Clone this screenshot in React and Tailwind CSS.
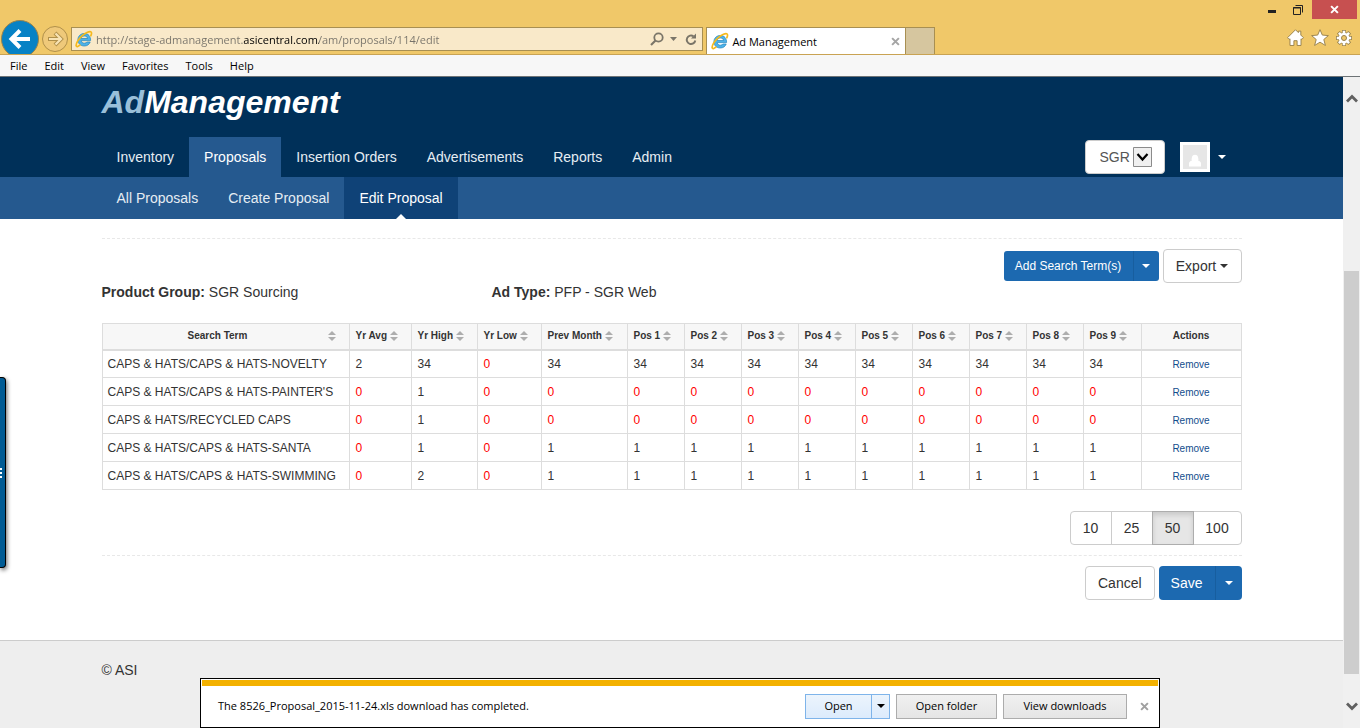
import React from "react";

const uiFont = "font-['Open_Sans','Noto_Sans',sans-serif]";

const menus = ["File", "Edit", "View", "Favorites", "Tools", "Help"];
const mainNav = ["Inventory", "Proposals", "Insertion Orders", "Advertisements", "Reports", "Admin"];
const subNav = ["All Proposals", "Create Proposal", "Edit Proposal"];

const columns = [
  { label: "Search Term", width: "w-[247px]" },
  { label: "Yr Avg", width: "w-[62px]" },
  { label: "Yr High", width: "w-[66px]" },
  { label: "Yr Low", width: "w-[64px]" },
  { label: "Prev Month", width: "w-[86px]" },
  { label: "Pos 1", width: "w-[57px]" },
  { label: "Pos 2", width: "w-[57px]" },
  { label: "Pos 3", width: "w-[57px]" },
  { label: "Pos 4", width: "w-[57px]" },
  { label: "Pos 5", width: "w-[57px]" },
  { label: "Pos 6", width: "w-[57px]" },
  { label: "Pos 7", width: "w-[57px]" },
  { label: "Pos 8", width: "w-[57px]" },
  { label: "Pos 9", width: "w-[58px]" },
];

const rows = [
  { term: "CAPS & HATS/CAPS & HATS-NOVELTY", avg: 2, high: 34, low: 0, prev: 34, pos: 34 },
  { term: "CAPS & HATS/CAPS & HATS-PAINTER'S", avg: 0, high: 1, low: 0, prev: 0, pos: 0 },
  { term: "CAPS & HATS/RECYCLED CAPS", avg: 0, high: 1, low: 0, prev: 0, pos: 0 },
  { term: "CAPS & HATS/CAPS & HATS-SANTA", avg: 0, high: 1, low: 0, prev: 1, pos: 1 },
  { term: "CAPS & HATS/CAPS & HATS-SWIMMING", avg: 0, high: 2, low: 0, prev: 1, pos: 1 },
];

function IeIcon() {
  return (
    <svg width="18" height="18" viewBox="0 0 18 18" className="shrink-0" aria-hidden="true">
      <path
        d="M15.600 10.600H6.300c.2 1.600 1.400 2.600 3.100 2.600 1.200 0 2-.4 2.600-1.200h3.200c-.9 2.500-3 4-5.900 4-3.800 0-6.400-2.500-6.400-6.200S5.600 3.500 9.400 3.500c3.900 0 6.300 2.700 6.200 7.100zM6.300 8.500h6.200C12.300 6.900 11.200 6 9.400 6S6.500 6.900 6.300 8.500z"
        fill="#4db2e8"
        stroke="#2385bf"
        strokeWidth="0.7"
      />
      <path
        d="M4.800 15.200C3 16.900 1.500 17 1.200 15.900c-.5-2 2-6.600 5.800-10C10.700 2.500 14.900.8 16.100 2c.7.7.5 2-.2 3.600"
        fill="none"
        stroke="#f5b91c"
        strokeWidth="1.700"
        strokeLinecap="round"
      />
    </svg>
  );
}

function Caret({ className = "" }) {
  return (
    <svg width="8" height="4" viewBox="0 0 8 4" className={"shrink-0 " + className} aria-hidden="true">
      <path d="M0 0h8L4 4z" fill="currentColor" />
    </svg>
  );
}

function SortIcon() {
  return (
    <svg width="8" height="10" viewBox="0 0 8 10" className="shrink-0" aria-hidden="true">
      <path d="M0 4l4-4 4 4zM0 6h8l-4 4z" fill="#adadad" />
    </svg>
  );
}

function CrossIcon({ size = 8, className = "" }) {
  return (
    <svg width={size} height={size} viewBox="0 0 8 8" className={className} aria-hidden="true">
      <path d="M1 1l6 6M7 1L1 7" stroke="currentColor" strokeWidth="1.800" />
    </svg>
  );
}

function BrowserBar() {
  return (
    <header className={"relative flex h-[55px] shrink-0 items-end overflow-hidden border-b border-[#c9a353] bg-[#f0c869] text-[11px] " + uiFont}>
      <button aria-label="Back" className="h-[34px] w-[41px] shrink-0">
        <svg width="41" height="34" viewBox="0 0 41 34" aria-hidden="true">
          <circle cx="20" cy="19" r="18.500" fill="#0782c5" stroke="#98834d" />
          <path d="M30 19H12M20 10.500l-8.500 8.500 8.500 8.500" fill="none" stroke="#fff" strokeWidth="4" />
        </svg>
      </button>
      <button aria-label="Forward" className="h-[34px] w-[30px] shrink-0">
        <svg width="30" height="34" viewBox="0 0 30 34" fill="none" aria-hidden="true">
          <circle cx="14" cy="19" r="12.500" fill="#efc97a" stroke="#b0904a" />
          <path d="M7 19h12M14 13l6 6-6 6" stroke="#b0904a" strokeWidth="4" />
          <path d="M8 19h11M14.500 13.500l5.500 5.500-5.500 5.500" stroke="#f8e3b4" strokeWidth="2.200" />
        </svg>
      </button>
      <div className="mb-[3px] flex h-6 w-[46.5%] shrink-0 items-center border border-[#a88f52] bg-[#f9e9c9] pl-[3px] text-[#7a7568]">
        <IeIcon />
        <input
          type="text"
          aria-label="Address"
          defaultValue="http://stage-admanagement.asicentral.com/am/proposals/114/edit"
          className="ml-[3px] min-w-0 flex-1 bg-[linear-gradient(90deg,#77736a_148px,#000_148px,#000_223px,#77736a_223px)] bg-clip-text pt-[2px] text-transparent outline-none"
        />
        <button aria-label="Search" className="w-4">
          <svg width="14" height="14" viewBox="0 0 14 14" fill="none" stroke="currentColor" strokeWidth="1.800" aria-hidden="true">
            <circle cx="8.500" cy="5.500" r="4.200" />
            <path d="M5.500 8.500L1 13" strokeWidth="2.200" />
          </svg>
        </button>
        <button aria-label="Show suggestions" className="ml-1">
          <svg width="7" height="4" viewBox="0 0 7 4" aria-hidden="true"><path d="M0 0h7L3.500 4z" fill="currentColor" /></svg>
        </button>
        <button aria-label="Refresh" className="mr-[5px] ml-2">
          <svg width="12" height="13" viewBox="0 0 12 13" fill="none" aria-hidden="true">
            <path d="M8.500 3.200A4.300 4.300 0 1 0 10.300 7.500" stroke="currentColor" strokeWidth="1.900" />
            <path d="M6 5.500h5V.5z" fill="currentColor" />
          </svg>
        </button>
      </div>
      <div className="ml-[3px] flex h-[27px] w-[200px] shrink-0 items-center border-x border-t border-[#a88f52] bg-white pl-1 text-black">
        <IeIcon />
        <span className="ml-[3px] flex-1 pt-[2px]">Ad Management</span>
        <button aria-label="Close tab" className="mr-[5px] text-[#a5a5a5]"><CrossIcon size={9} /></button>
      </div>
      <button aria-label="New tab" className="h-[27px] w-[29px] shrink-0 border-t border-r border-[#a88f52] bg-[#d6c69f]" />
      <div className="ml-auto flex h-full flex-col items-end justify-between pb-2">
        <div className="mr-[3px] flex h-[19px] items-center text-[#222]">
          <button aria-label="Minimize" className="mr-[17px]">
            <svg width="8" height="19" aria-hidden="true"><path d="M0 11.500h8" stroke="currentColor" strokeWidth="3" /></svg>
          </button>
          <button aria-label="Restore" className="mr-[9px]">
            <svg width="10" height="10" viewBox="0 0 10 10" fill="none" stroke="currentColor" aria-hidden="true">
              <path d="M.5 2.500h7v7h-7zM2.500 .500h7v7M0 3h8" />
            </svg>
          </button>
          <button aria-label="Close window" className="flex h-[19px] w-[45px] items-center justify-center bg-[#c75050] text-white">
            <CrossIcon size={9} />
          </button>
        </div>
        <div className="mr-2 flex items-center gap-[7px]">
          <button aria-label="Home">
            <svg width="17" height="17" viewBox="0 0 16 16" fill="#fff" stroke="#98824c" strokeWidth="0.900" aria-hidden="true">
              <path d="M8 .7L.5 8.200l1.600 1.600.7-.6v6.300h3.700v-4.500h3v4.500h3.700V9.200l.7.600 1.600-1.600L13 5.700V2h-2.300v1.400z" />
            </svg>
          </button>
          <button aria-label="Favorites">
            <svg width="18" height="17" viewBox="0 0 17 16" fill="#fff" stroke="#98824c" strokeWidth="0.900" aria-hidden="true">
              <path d="M8.500.6l2.200 5.100 5.700.5-4.300 3.700 1.500 5.600-5.100-3.100-5.100 3.100 1.500-5.600L.6 6.200l5.700-.5z" />
            </svg>
          </button>
          <button aria-label="Tools">
            <svg width="16" height="16" viewBox="0 0 16 16" aria-hidden="true">
              <g stroke="#98824c" strokeWidth="4">
                <path d="M8 0v16M0 8h16M2.300 2.300l11.400 11.400M13.700 2.300L2.300 13.700" />
              </g>
              <circle cx="8" cy="8" r="6" fill="#98824c" />
              <g stroke="#fff" strokeWidth="2.600">
                <path d="M8 .8v14.400M.8 8h14.400M2.900 2.900l10.200 10.200M13.100 2.900L2.900 13.100" />
              </g>
              <circle cx="8" cy="8" r="5.300" fill="#fff" />
              <circle cx="8" cy="8" r="2.500" fill="#f0c869" stroke="#98824c" strokeWidth="1" />
            </svg>
          </button>
        </div>
      </div>
    </header>
  );
}

function SiteHeader() {
  return (
    <div className="text-sm text-[#e6edf3]">
      <div className="bg-[#003059]">
        <div className="mx-auto max-w-[1140px]">
          <h1 className="flex h-[60px] items-start pt-[7px] text-[32px] leading-9 font-bold text-white italic">
            <span className="text-[#99bfd9]">Ad</span>Management
          </h1>
          <div className="flex h-10 items-center">
            <nav aria-label="Main" className="flex flex-1">
              {mainNav.map((item) => (
                <a
                  key={item}
                  href="#"
                  className={"px-[15px] leading-10 " + (item === "Proposals" ? "bg-[#25598f] text-white" : "")}
                >
                  {item}
                </a>
              ))}
            </nav>
            <div className="relative rounded border border-[#ccc] bg-white">
              <select
                aria-label="Product group"
                className="h-8 w-[78px] appearance-none bg-transparent pl-[14px] text-[#555] outline-none"
              >
                <option>SGR</option>
              </select>
              <svg width="19" height="20" viewBox="0 0 19 20" className="pointer-events-none absolute top-[6px] right-3" aria-hidden="true">
                <path d="M.5 .500h18v19H.5z" fill="#f0f0f0" stroke="#8b8b8b" />
                <path d="M4.500 7l5 5.500 5-5.500" fill="none" stroke="#000" strokeWidth="2.200" />
              </svg>
            </div>
            <button aria-label="Account" className="mr-4 ml-[15px] flex items-center gap-2">
              <svg width="30" height="30" viewBox="0 0 30 30" aria-hidden="true">
                <path d="M0 0h30v30H0z" fill="#fff" />
                <path d="M3 3h24v24H3z" fill="#e6e6e6" />
                <path d="M9 24.500v-3c0-1.500 1-2.500 3-3l-.5-1 .5-2.500c.4-1.500 1.500-2.200 3-2.200s2.600.7 3 2.200l.5 2.500-.5 1c2 .5 3 1.500 3 3v3z" fill="#fff" />
              </svg>
              <Caret className="text-white" />
            </button>
          </div>
        </div>
      </div>
      <div className="bg-[#25598f]">
        <nav aria-label="Proposals" className="mx-auto flex max-w-[1140px]">
          {subNav.map((item) => (
            <a
              key={item}
              href="#"
              className={"relative px-[15px] leading-[42px] " + (item === "Edit Proposal" ? "bg-[#0f4277] text-white" : "")}
            >
              {item}
              {item === "Edit Proposal" && (
                <svg width="10" height="5" viewBox="0 0 10 5" className="absolute bottom-0 left-1/2 -translate-x-1/2" aria-hidden="true">
                  <path d="M0 5l5-5 5 5z" fill="#fff" />
                </svg>
              )}
            </a>
          ))}
        </nav>
      </div>
    </div>
  );
}

function Value({ value }) {
  return <td className={"border border-[#ddd] pl-[6px] " + (value === 0 ? "text-[#f00]" : "")}>{value}</td>;
}

function TermsTable() {
  return (
    <table className="w-full table-fixed border-collapse border border-[#ddd] text-left text-xs">
      <thead className="bg-[#f7f7f7] text-[10px] font-bold">
        <tr className="h-[26px]">
          {columns.map(({ label, width }) => (
            <th key={label} scope="col" className={"border border-b-2 border-[#ddd] " + width}>
              <button
                className={
                  "flex w-full items-center leading-4 whitespace-nowrap " +
                  (label === "Search Term" ? "justify-between pr-[13px] pl-[85px]" : "gap-[3px] pl-[6px]")
                }
              >
                {label}
                <SortIcon />
              </button>
            </th>
          ))}
          <th scope="col" className="w-[100px] border border-b-2 border-[#ddd] text-center leading-4">Actions</th>
        </tr>
      </thead>
      <tbody>
        {rows.map((row) => (
          <tr key={row.term} className="h-7">
            <td className="border border-[#ddd] px-[5px] whitespace-nowrap">{row.term}</td>
            <Value value={row.avg} />
            <Value value={row.high} />
            <Value value={row.low} />
            <Value value={row.prev} />
            {Array.from({ length: 9 }, (_, i) => (
              <Value key={i} value={row.pos} />
            ))}
            <td className="border border-[#ddd] pt-[2px] text-center text-[10px]">
              <a href="#" className="text-[#124d8c]">Remove</a>
            </td>
          </tr>
        ))}
      </tbody>
    </table>
  );
}

function Divider() {
  return <hr className="border-t border-dashed border-[#e8e8e8]" />;
}

const outline = "h-[34px] border border-[#ccc] bg-white text-[#333]";

function ProposalPage() {
  return (
    <main className="mx-auto max-w-[1140px] pt-[19px] pb-10 text-sm text-[#333]">
      <Divider />
      <div className="mt-[10px] flex items-center justify-end gap-1">
        <div className="flex h-[30px] rounded-[3px] bg-[#1c69b0] text-xs text-white">
          <button className="w-[130px] border-r border-[#175e9f]">Add Search Term(s)</button>
          <button aria-label="More search term actions" className="flex w-[25px] items-center justify-center"><Caret /></button>
        </div>
        <button className={"flex w-[79px] items-center justify-center gap-1 rounded " + outline}>
          Export <Caret />
        </button>
      </div>
      <div className="grid grid-cols-3 gap-[30px] leading-[18px]">
        <p><strong>Product Group:</strong> SGR Sourcing</p>
        <p><strong>Ad Type:</strong> PFP - SGR Web</p>
      </div>
      <div className="mt-[22px]"><TermsTable /></div>
      <div className="mt-[21px] mb-[10px] flex justify-end">
        <button className={"w-[42px] rounded-l " + outline}>10</button>
        <button className={"-ml-px w-[42px] " + outline}>25</button>
        <button aria-pressed="true" className="relative -ml-px h-[34px] w-[42px] border border-[#adadad] bg-[#e6e6e6] text-[#333] shadow-[inset_0_3px_5px_rgba(0,0,0,0.125)]">50</button>
        <button className={"-ml-px w-[49px] rounded-r " + outline}>100</button>
      </div>
      <Divider />
      <div className="mt-[10px] flex justify-end gap-1">
        <button className={"rounded px-3 " + outline}>Cancel</button>
        <div className="flex h-[34px] rounded bg-[#1c69b0] text-white">
          <button className="border-r border-[#175e9f] px-3">Save</button>
          <button aria-label="More save options" className="flex w-[26px] items-center justify-center"><Caret /></button>
        </div>
      </div>
    </main>
  );
}

function Scrollbar() {
  return (
    <div className="flex w-[17px] shrink-0 flex-col bg-[#f0f0f0] px-px text-[#606060]" aria-hidden="true">
      <div className="flex h-[42px] items-center justify-center">
        <svg width="12" height="9" viewBox="0 0 12 9"><path d="M1 7.500l5-5 5 5" fill="none" stroke="currentColor" strokeWidth="2.800" /></svg>
      </div>
      <div className="flex-[152]" />
      <div className="flex-[403] bg-[#cdcdcd]" />
      <div className="flex h-[54px] items-center justify-center pt-[10px]">
        <svg width="12" height="9" viewBox="0 0 12 9"><path d="M1 1.500l5 5 5-5" fill="none" stroke="currentColor" strokeWidth="2.800" /></svg>
      </div>
    </div>
  );
}

function DownloadBar() {
  const grey = "h-[25px] border border-[#acacac] bg-linear-to-b from-[#f0f0f0] to-[#e5e5e5]";
  return (
    <div
      role="status"
      className={"absolute bottom-0 left-1/2 w-[960px] max-w-full -translate-x-1/2 border border-black bg-white p-px text-[11px] text-black " + uiFont}
    >
      <div className="h-[6px] bg-[#f3b100]" />
      <div className="flex h-10 items-center pl-4">
        <p className="flex-1">The 8526_Proposal_2015-11-24.xls download has completed.</p>
        <div className="flex h-[25px] border border-[#7eb4ea] bg-linear-to-b from-[#ecf4fc] to-[#dcebfc]">
          <button className="w-[66px] border-r border-[#7eb4ea]">Open</button>
          <button aria-label="Open options" className="flex w-[17px] items-center justify-center"><Caret /></button>
        </div>
        <button className={"ml-[6px] w-[101px] " + grey}>Open folder</button>
        <button className={"ml-[6px] w-[124px] " + grey}>View downloads</button>
        <button aria-label="Dismiss" className="mr-[9px] ml-[13px] text-[#a0a0a0]"><CrossIcon size={9} /></button>
      </div>
    </div>
  );
}

export default function App() {
  return (
    <div className="relative flex h-screen flex-col overflow-hidden bg-white">
      <BrowserBar />
      <nav aria-label="Menu" className={"flex h-[22px] shrink-0 items-center gap-px border-b border-[#6d7376] bg-[#f7f7f7] pt-px pl-[2px] text-[11px] text-black " + uiFont}>
        {menus.map((m) => (
          <button key={m} className="px-2">{m}</button>
        ))}
      </nav>
      <div className="relative flex min-h-0 flex-1 font-['Liberation_Sans',Arial,sans-serif]">
        <div className="flex min-w-0 flex-1 flex-col overflow-hidden">
          <SiteHeader />
          <ProposalPage />
          <footer className="flex-1 border-t border-[#ccc] bg-[#eee]">
            <p className="mx-auto max-w-[1140px] pt-[19px] text-sm text-[#333]">© ASI</p>
          </footer>
        </div>
        <Scrollbar />
        <button
          aria-label="Open side panel"
          className="absolute top-[300px] left-0 flex h-[191px] w-[6px] items-center rounded-r-[4px] border-y border-r border-black bg-[#005b94] shadow-[1px_2px_4px_rgba(0,0,0,0.6)]"
        >
          <svg width="2" height="10" aria-hidden="true"><path d="M0 0h2v2H0zM0 4h2v2H0zM0 8h2v2H0z" fill="#fff" /></svg>
        </button>
      </div>
      <DownloadBar />
    </div>
  );
}
